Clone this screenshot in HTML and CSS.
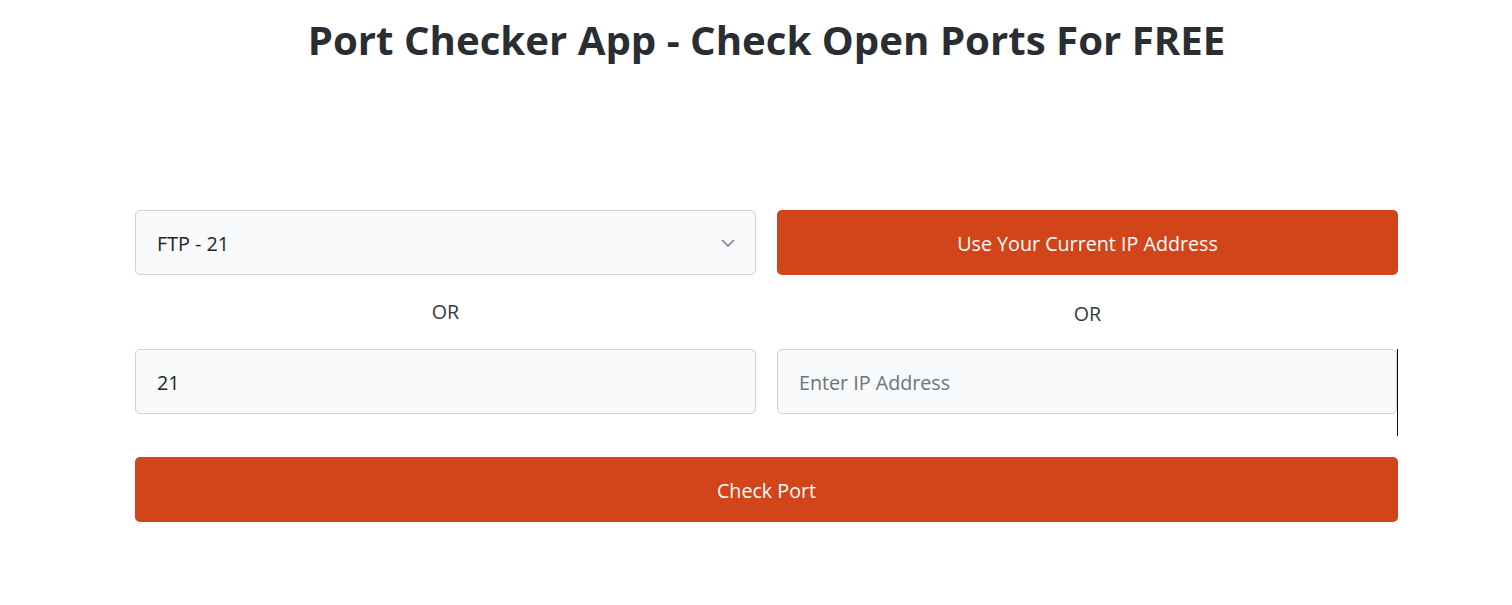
FILE: index.html
```html
<!DOCTYPE html>
<html lang="en">
<head>
<meta charset="utf-8">
<title>Port Checker App</title>
<link rel="stylesheet" href="styles.css">
</head>
<body>
<header class="title-wrap">
  <h1 class="title">Port Checker App - Check Open Ports For FREE</h1>
</header>
<main class="checker">
  <div class="grid">
    <div class="col">
      <div class="field select-field">
        <span class="field-text">FTP - 21</span>
        <svg class="chevron" width="14" height="9" viewBox="0 0 14 9"><path d="M1.5 1.5 L7 7 L12.5 1.5" fill="none" stroke="#7c828c" stroke-width="1.6" stroke-linecap="round" stroke-linejoin="round"/></svg>
      </div>
      <div class="or">OR</div>
      <div class="field"><span class="field-text">21</span></div>
    </div>
    <div class="col">
      <button class="btn">Use Your Current IP Address</button>
      <div class="or or-right">OR</div>
      <div class="ip-wrap">
        <div class="field"><span class="placeholder">Enter IP Address</span></div>
      </div>
    </div>
  </div>
  <button class="btn btn-full">Check Port</button>
</main>
</body>
</html>
```
FILE: styles.css
```css
* { box-sizing: border-box; }
html, body { margin: 0; padding: 0; background: #fff; }
body {
  font-family: "Open Sans", "Noto Sans", sans-serif;
  color: #212529;
  width: 1512px;
  height: 605px;
  overflow: hidden;
}
.title-wrap {
  padding-left: 21px;
  display: flex;
  justify-content: center;
  padding-top: 13px;
}
.title {
  margin: 0;
  font-size: 40.2px;
  font-weight: 700;
  line-height: 54px;
  color: #2a2e33;
}
.checker {
  margin: 143px 0 0 135px;
  width: 1263px;
}
.grid {
  display: grid;
  grid-template-columns: 621px 621px;
  column-gap: 21px;
}
.col { display: flex; flex-direction: column; }
.field {
  height: 65px;
  border: 1px solid #ced4da;
  background: #f8f9fa;
  border-radius: 5px;
  display: flex;
  align-items: center;
  justify-content: space-between;
  padding: 2px 20px 0 21px;
  font-size: 19.7px;
}
.field-text { color: #212529; }
.placeholder { color: #6c757d; }
.chevron { margin-top: -1px; }
.or {
  height: 74px;
  display: flex;
  align-items: center;
  justify-content: center;
  font-size: 19.7px;
  color: #343a40;
  padding-bottom: 1px;
}
.or-right { padding-bottom: 0; padding-top: 2px; }
.ip-wrap {
  border-right: 1px solid #111;
  height: 87px;
}
.btn {
  height: 65px;
  border: none;
  border-radius: 5px;
  background: #d24419;
  color: #fff;
  font-family: inherit;
  font-size: 19.7px;
  display: flex;
  align-items: center;
  justify-content: center;
  width: 100%;
  padding: 2px 0 0;
}
.btn-full {
  margin-top: 21px;
  width: 1263px;
}
```
